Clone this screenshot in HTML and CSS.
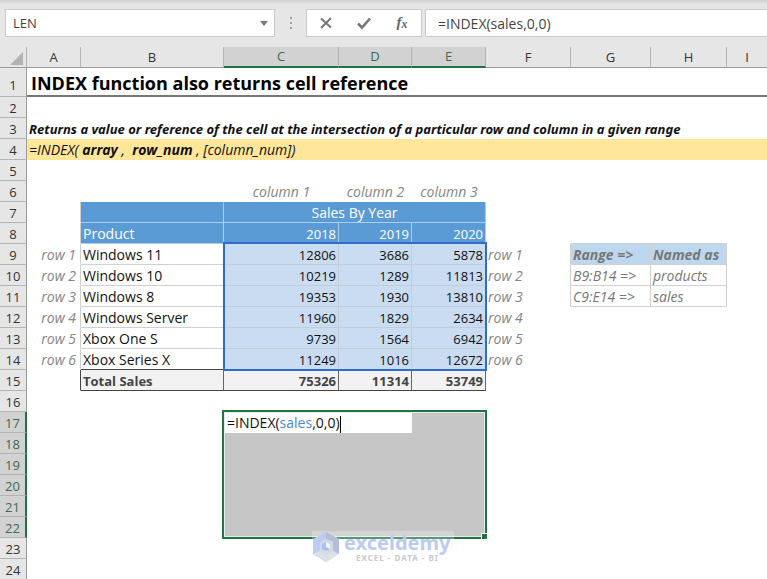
FILE: index.html
```html
<!DOCTYPE html>
<html lang="en">

<head>
    <meta charset="UTF-8">
    <meta name="viewport" content="width=device-width, initial-scale=1.0">
    <title>INDEX function</title>
    <link rel="stylesheet" href="styles.css">
</head>

<body>
    <div class="toolbar">
        <div class="namebox">
            <input type="text" value="LEN" aria-label="Name box">
            <button type="button" aria-label="Names"><span class="caret"></span></button>
        </div>
        <div class="dots"><i></i><i></i><i></i></div>
        <div class="tools">
            <button type="button" aria-label="Cancel">
                <svg width="14" height="14" viewBox="0 0 14 14"><path d="M2 2.5L12 11.5M12 2L2 12" stroke="#777" stroke-width="2" fill="none" /></svg>
            </button>
            <button type="button" aria-label="Enter">
                <svg width="14" height="14" viewBox="0 0 14 14"><path d="M1 7.5L5 11.5L13 2.5" stroke="#777" stroke-width="2.6" fill="none" /></svg>
            </button>
            <button type="button" class="fx" aria-label="Insert function">f<sub>x</sub></button>
        </div>
        <input type="text" class="formula" value="=INDEX(sales,0,0)" aria-label="Formula bar">
    </div>

    <div class="sheet">
        <table class="grid">
            <colgroup>
                <col class="w-num"><col class="w-a"><col class="w-b"><col class="w-c"><col class="w-d">
                <col class="w-e"><col class="w-f"><col class="w-g"><col class="w-h"><col>
            </colgroup>
            <thead>
                <tr>
                    <th class="corner"><span></span></th>
                    <th>A</th>
                    <th>B</th>
                    <th class="on">C</th>
                    <th class="on">D</th>
                    <th class="on">E</th>
                    <th>F</th>
                    <th>G</th>
                    <th>H</th>
                    <th class="last">I</th>
                </tr>
            </thead>
            <tbody>
                <tr class="title"><th>1</th><td colspan="9">INDEX function also returns cell reference</td></tr>
                <tr><th>2</th><td colspan="9"></td></tr>
                <tr class="desc"><th>3</th><td colspan="9">Returns a value or reference of the cell at the intersection of a particular row and column in a given range</td></tr>
                <tr class="syntax"><th>4</th><td colspan="9">=INDEX( <b>array</b> , <b>&nbsp;row_num</b> , [column_num])</td></tr>
                <tr><th>5</th><td colspan="9"></td></tr>
                <tr><th>6</th><td></td><td></td><td class="note mid">column 1</td><td class="note mid">column 2</td><td class="note mid">column 3</td><td></td><td></td><td></td><td></td></tr>
                <tr><th>7</th><td class="edge"></td><td class="blue"></td><td class="blue mid" colspan="3">Sales By Year</td><td></td><td></td><td></td><td></td></tr>
                <tr><th>8</th><td class="edge"></td><td class="blue">Product</td><td class="blue num">2018</td><td class="blue num">2019</td><td class="blue num">2020</td><td></td><td class="top"></td><td class="top"></td><td></td></tr>
                <tr><th>9</th><td class="note right edge">row 1</td><td class="cell">Windows 11</td><td class="val anchor">12806<div class="frame"></div></td><td class="val">3686</td><td class="val">5878</td><td class="note edge">row 1</td><td class="named head">Range =&gt;</td><td class="named head">Named as</td><td></td></tr>
                <tr><th>10</th><td class="note right edge">row 2</td><td class="cell">Windows 10</td><td class="val">10219</td><td class="val">1289</td><td class="val">11813</td><td class="note edge">row 2</td><td class="named">B9:B14 =&gt;</td><td class="named">products</td><td></td></tr>
                <tr><th>11</th><td class="note right edge">row 3</td><td class="cell">Windows 8</td><td class="val">19353</td><td class="val">1930</td><td class="val">13810</td><td class="note edge">row 3</td><td class="named">C9:E14 =&gt;</td><td class="named">sales</td><td></td></tr>
                <tr><th>12</th><td class="note right edge">row 4</td><td class="cell">Windows Server</td><td class="val">11960</td><td class="val">1829</td><td class="val">2634</td><td class="note">row 4</td><td></td><td></td><td></td></tr>
                <tr><th>13</th><td class="note right edge">row 5</td><td class="cell">Xbox One S</td><td class="val">9739</td><td class="val">1564</td><td class="val">6942</td><td class="note">row 5</td><td></td><td></td><td></td></tr>
                <tr class="before-total"><th>14</th><td class="note right edge">row 6</td><td class="cell">Xbox Series X</td><td class="val">11249</td><td class="val">1016</td><td class="val">12672</td><td class="note">row 6</td><td></td><td></td><td></td></tr>
                <tr class="total"><th>15</th><td class="edge"></td><td class="sum">Total Sales</td><td class="sum num">75326</td><td class="sum num">11314</td><td class="sum num">53749</td><td></td><td></td><td></td><td></td></tr>
                <tr><th>16</th><td colspan="9"></td></tr>
                <tr class="sel">
                    <th>17</th><td></td><td></td>
                    <td class="picked" colspan="3" rowspan="6">
                        <div class="editor" role="textbox" contenteditable="true" aria-label="Cell C17">=INDEX(<span>sales</span>,0,0)<i class="cursor"></i></div>
                        <div class="ring"><i class="handle"></i></div>
                    </td>
                    <td></td><td></td><td></td><td></td>
                </tr>
                <tr class="sel"><th>18</th><td colspan="2"></td><td colspan="4"></td></tr>
                <tr class="sel"><th>19</th><td colspan="2"></td><td colspan="4"></td></tr>
                <tr class="sel"><th>20</th><td colspan="2"></td><td colspan="4"></td></tr>
                <tr class="sel"><th>21</th><td colspan="2"></td><td colspan="4"></td></tr>
                <tr class="sel"><th>22</th><td colspan="2"></td><td colspan="4"></td></tr>
                <tr><th>23</th><td colspan="9"></td></tr>
                <tr><th>24</th><td colspan="9"></td></tr>
            </tbody>
        </table>

        <div class="watermark">
            <svg width="28" height="32" viewBox="0 0 28 32">
                <path d="M14 1L27 8V23L14 31L1 23V8Z" fill="#bccdf5" />
                <path d="M14 1L27 8V23L21 20V11L14 8Z" fill="#b3bfd6" />
                <path d="M1 23L8 20L14 23L21 20L27 23L14 31Z" fill="#dce1e8" />
                <path d="M14 8L21 11V20L14 23L8 20V11Z" fill="#d3dae6" />
                <path d="M14 11L18 13V18L14 20L10 18V13Z" fill="#a9bff0" />
                <path d="M14 11L18 13V18L14 16Z" fill="#f2f5fb" />
            </svg>
            <div>
                <div class="brand">exceldemy</div>
                <div class="tag">EXCEL - DATA - BI</div>
            </div>
        </div>
    </div>
</body>

</html>
```

FILE: styles.css
```css
* {
    box-sizing: border-box;
}

body {
    margin: 0;
    height: 100vh;
    overflow: hidden;
    background: #fff;
    font-family: "Open Sans", "Noto Sans", sans-serif;
    font-size: 14px;
    color: #111;
}

input,
button {
    font: inherit;
    color: #444;
    border: 0;
    padding: 0;
    margin: 0;
    background: none;
    outline: none;
}

/* formula bar */
.toolbar {
    display: flex;
    height: 47px;
    padding: 9px 0 9px 5px;
    background: linear-gradient(#d2d2d2, #e6e6e6 5px);
}

.namebox {
    display: flex;
    width: 270px;
    height: 28px;
    background: #fff;
    border: 1px solid #c9c9c9;
}

.namebox input {
    flex: 1;
    min-width: 0;
    padding-left: 7px;
    font-size: 13px;
}

.namebox button {
    width: 20px;
    display: flex;
    align-items: center;
    justify-content: center;
}

.caret {
    border: 4px solid transparent;
    border-top: 5px solid #777;
    border-bottom: 0;
}

.dots {
    width: 31px;
    height: 28px;
    display: flex;
    flex-direction: column;
    align-items: center;
    justify-content: center;
    gap: 3px;
}

.dots i {
    width: 2px;
    height: 2px;
    background: #a0a0a0;
}

.tools {
    display: flex;
    width: 116px;
    height: 28px;
    background: #fff;
    border: 1px solid #c9c9c9;
    margin-right: 3px;
}

.tools button {
    flex: 1;
    display: flex;
    align-items: center;
    justify-content: center;
}

.tools .fx {
    display: block;
    font: italic bold 15px "Liberation Serif", serif;
    color: #666;
}

.fx sub {
    font-size: 12px;
    vertical-align: -1px;
}

.formula {
    flex: 1;
    min-width: 0;
    height: 28px;
    padding-left: 12px;
    background: #fff;
    border: 1px solid #c9c9c9;
    border-right: 0;
}

/* sheet */
.sheet {
    position: relative;
}

.grid {
    width: 100%;
    table-layout: fixed;
    border-collapse: separate;
    border-spacing: 0;
}

.w-num { width: 27px; }
.w-a { width: 54px; }
.w-b { width: 143px; }
.w-c { width: 115px; }
.w-d { width: 73px; }
.w-e { width: 74px; }
.w-f { width: 85px; }
.w-g { width: 80px; }
.w-h { width: 76px; }

.grid th,
.grid td {
    height: 21px;
    padding: 2px 2px 0;
    line-height: 18px;
    white-space: nowrap;
    text-align: left;
    border-bottom: 1px solid transparent;
}

.grid th {
    padding: 2px 0 0;
    font-size: 13px;
    text-align: center;
    font-weight: normal;
    color: #333;
    background: #e6e6e6;
}

.grid thead th {
    padding: 0;
    line-height: 19px;
    border-bottom: 1px solid #9b9b9b;
    border-right: 1px solid #b4b4b4;
}

.grid thead .last {
    border-right: 0;
}

.grid thead .on {
    color: #3a6a50;
    background: #d2d2d2;
    border-bottom: 2px solid #217346;
}

.corner span {
    display: block;
    width: 0;
    margin: 2px 3px 0 auto;
    border-left: 13px solid transparent;
    border-bottom: 13px solid #b2b2b2;
}

.grid tbody th {
    border-right: 1px solid #9b9b9b;
    border-bottom: 1px solid #b4b4b4;
}

.grid tbody .sel th {
    color: #3a6a50;
    background: #d2d2d2;
    border-right: 2px solid #217346;
}

.grid .title th,
.grid .title td {
    height: 29px;
}

.grid .title th {
    padding-top: 6px;
}

.grid .title td {
    padding: 4px 4px 0;
    font-size: 18px;
    font-weight: bold;
    line-height: 23px;
    color: #000;
    border-bottom: 2px solid #777;
}

.desc td {
    font: italic bold 13px "Noto Sans", sans-serif;
}

.syntax td {
    font-style: italic;
    background: #ffe699;
}

.grid .note {
    font-style: italic;
    color: #858585;
}

.grid .mid {
    text-align: center;
}

.grid .right {
    text-align: right;
}

.grid .num,
.grid .val {
    font-size: 13px;
    text-align: right;
}

.grid .edge {
    padding-right: 4px;
    border-right: 1px solid #d0d0d0;
}

.grid .top {
    border-bottom: 1px solid #d0d0d0;
}

.grid .blue {
    color: #fff;
    background: #5b9bd5;
    border-right: 1px solid #adcdea;
    border-bottom: 1px solid #adcdea;
}

.grid .cell,
.grid .named {
    border-right: 1px solid #d0d0d0;
    border-bottom: 1px solid #d0d0d0;
}

.grid .val {
    background: #c9dcf2;
    border-right: 1px solid #c3ccd8;
    border-bottom: 1px solid #c3ccd8;
}

.anchor {
    position: relative;
}

/* outline of the range used in the formula */
.frame {
    position: absolute;
    top: -2px;
    left: -1px;
    width: 264px;
    height: 129px;
    border: 2px solid #2e6bcb;
}

.named {
    font-style: italic;
    color: #777;
}

.head {
    font-weight: bold;
    background: #bdd7ee;
}

.grid .before-total .cell {
    border-bottom-color: #444;
}

.grid .total .edge {
    border-right-color: #444;
}

.grid .sum {
    font-size: 13px;
    font-weight: bold;
    color: #444;
    background: #f2f2f2;
    border-right: 1px solid #666;
    border-bottom: 1px solid #444;
}

.grid .picked {
    position: relative;
    padding: 0;
    vertical-align: top;
    background: #c6c6c6;
}

.editor {
    width: 188px;
    height: 20px;
    margin-top: 1px;
    padding-left: 3px;
    line-height: 20px;
    background: #fff;
    outline: none;
}

.editor span {
    color: #4a86cf;
}

.cursor {
    display: inline-block;
    width: 1px;
    height: 17px;
    vertical-align: middle;
    background: #000;
}

.ring {
    position: absolute;
    top: -2px;
    left: -2px;
    right: -1px;
    bottom: -2px;
    border: 2px solid #217346;
    box-shadow: inset 0 0 0 1px #e4eee8;
    pointer-events: none;
}

.handle {
    position: absolute;
    right: -3px;
    bottom: -3px;
    width: 7px;
    height: 7px;
    background: #217346;
    border: 1px solid #fff;
}

.watermark {
    position: absolute;
    top: 484px;
    left: 312px;
    width: 142px;
    height: 32px;
    display: flex;
    gap: 4px;
    background: rgba(255, 255, 255, 0.25);
}

.brand {
    font: bold 20px/24px "Noto Sans", sans-serif;
    color: #bccbf0;
}

.tag {
    padding-left: 12px;
    font: bold 8px/6px "Noto Sans", sans-serif;
    letter-spacing: 1px;
    color: #c8cacd;
}
```
